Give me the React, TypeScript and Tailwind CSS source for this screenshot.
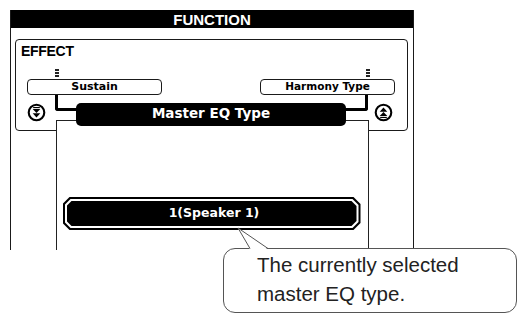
import React from "react";

const lcd = "font-['DejaVu_Sans',sans-serif] font-bold";

function Marker() {
    return (
        <div className="flex flex-col gap-[1px] w-[4px]">
            <div className="h-[2px] bg-[#222]"></div>
            <div className="h-[2px] bg-[#222]"></div>
            <div className="h-[2px] bg-[#222]"></div>
        </div>
    );
}

function ScrollIcon({up}: {up?: boolean}) {
    return (
        <svg viewBox="0 0 20 20" className="w-[19px] h-[19px] mt-[8px] shrink-0">
            <circle cx="10" cy="10" r="8.2" fill="white" stroke="black" strokeWidth="2.2" />
            {up ? (
                <g fill="black">
                    <polygon points="10,4.8 14,9.2 6,9.2" />
                    <polygon points="10,9.4 14,13.8 6,13.8" />
                    <rect x="6.5" y="14.6" width="7" height="1.2" />
                </g>
            ) : (
                <g fill="black">
                    <rect x="6.5" y="4.2" width="7" height="1.2" />
                    <polygon points="6,6.2 14,6.2 10,10.6" />
                    <polygon points="6,10.8 14,10.8 10,15.2" />
                </g>
            )}
        </svg>
    );
}

export default function App() {
    return (
        <div className="w-[523px] h-[318px] bg-white relative overflow-hidden pt-[10px] pl-[10px]">
            <div className="w-[404px] h-[240px] border-x-[1.5px] border-[#1a1a1a] flex flex-col">
                <div className="h-[18px] bg-black flex items-center justify-center">
                    <span className="text-white font-['Liberation_Sans',sans-serif] font-bold text-[15px] leading-none">
                        FUNCTION
                    </span>
                </div>

                <div className="mt-[11px] ml-[3.5px] w-[393px] h-[92px] border-[1.5px] border-[#1a1a1a] rounded-[4px] flex flex-col">
                    <div className="h-[19px] pt-[3px] pl-[5.5px] font-['Liberation_Sans',sans-serif] font-bold text-[14px] leading-[16px] tracking-[-0.3px] text-black">
                        EFFECT
                    </div>

                    <div className="mt-[9.5px] flex justify-between px-[11.5px]">
                        <div className="w-[135px] flex flex-col">
                            <div className="pl-[27.5px]">
                                <Marker />
                            </div>
                            <div className="mt-[2px] h-[16px] border-[1.5px] border-[#1a1a1a] rounded-[4px] flex items-center justify-center">
                                <span className={`${lcd} text-[11px] leading-none text-black`}>Sustain</span>
                            </div>
                        </div>
                        <div className="w-[135px] flex flex-col">
                            <div className="pl-[105.5px]">
                                <Marker />
                            </div>
                            <div className="mt-[2px] h-[16px] border-[1.5px] border-[#1a1a1a] rounded-[4px] flex items-center justify-center">
                                <span className={`${lcd} text-[10.5px] leading-none text-black`}>Harmony Type</span>
                            </div>
                        </div>
                    </div>

                    <div className="flex items-start pl-[11.5px]">
                        <ScrollIcon />
                        <div className="ml-[9px] w-[21px] h-[16px] border-l-[3px] border-b-[3px] border-black rounded-bl-[3px] shrink-0"></div>
                        <div className="relative z-20 mt-[8px] w-[270px] h-[23px] bg-black rounded-[5px] flex items-center justify-center shrink-0">
                            <span className={`${lcd} text-white text-[13.5px] leading-none`}>Master EQ Type</span>
                        </div>
                        <div className="w-[22px] h-[16px] border-r-[3px] border-b-[3px] border-black rounded-br-[3px] shrink-0"></div>
                        <div className="ml-[6px]">
                            <ScrollIcon up />
                        </div>
                    </div>
                </div>

                <div className="relative z-10 -mt-[11px] ml-[44.5px] w-[313px] h-[130px] bg-white border-x border-t border-[#222]">
                    <div className="mt-[76px] ml-[6px] w-[298px] h-[33px] bg-black p-[2px] [clip-path:polygon(7px_0,calc(100%_-_7px)_0,100%_7px,100%_calc(100%_-_7px),calc(100%_-_7px)_100%,7px_100%,0_calc(100%_-_7px),0_7px)]">
                        <div className="w-full h-full bg-white p-[2px] [clip-path:polygon(6px_0,calc(100%_-_6px)_0,100%_6px,100%_calc(100%_-_6px),calc(100%_-_6px)_100%,6px_100%,0_calc(100%_-_6px),0_6px)]">
                            <div className="w-full h-full bg-black flex items-center justify-center [clip-path:polygon(5px_0,calc(100%_-_5px)_0,100%_5px,100%_calc(100%_-_5px),calc(100%_-_5px)_100%,5px_100%,0_calc(100%_-_5px),0_5px)]">
                                <span className={`${lcd} text-white text-[12.5px] leading-none pl-[5px]`}>1(Speaker 1)</span>
                            </div>
                        </div>
                    </div>
                </div>
            </div>

            <div className="absolute left-[223px] top-[248px] w-[294px] h-[65px] rounded-[12px] border border-[#555] bg-white pt-[1px] pl-[33px] z-20">
                <p className="font-['Liberation_Sans',Arial,sans-serif] text-[20.5px] leading-[29px] text-[#222]">
                    The currently selected
                    <br />
                    master EQ type.
                </p>
            </div>
            <svg className="absolute left-[236px] top-[226px] w-[36px] h-[24px] z-30" viewBox="0 0 36 24">
                <polygon points="2,2 14,23.6 32,23.6" fill="white" />
                <polyline points="14,22.5 2,2 32,22.5" fill="none" stroke="#555" strokeWidth="1" />
            </svg>
        </div>
    );
}
